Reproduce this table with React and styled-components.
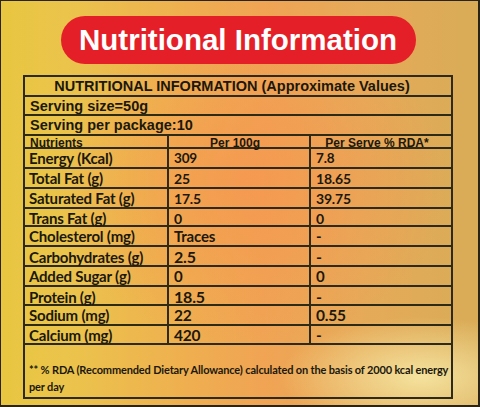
import styled, { createGlobalStyle } from 'styled-components';

const GlobalStyle = createGlobalStyle`
  html, body {
    margin: 0;
    padding: 0;
  }
  body {
    font-family: 'Liberation Sans', Arial, sans-serif;
  }
`;

const Label = styled.div`
  box-sizing: border-box;
  width: 480px;
  height: 407px;
  padding: 15px 25px 0 22px;
  border: 1px solid #2a2416;
  border-right-width: 2px;
  border-bottom-width: 2px;
  background:
    radial-gradient(ellipse 140px 60px at 88% 93%, rgba(248, 236, 170, 0.85), transparent),
    radial-gradient(ellipse 200px 160px at 52% 45%, rgba(246, 150, 80, 0.75), transparent),
    linear-gradient(90deg, #e8c640 0%, #ebc44c 14%, #efae50 40%, #f0a454 55%, #e6aa58 75%, #d9ac58 100%);
`;

const Pill = styled.div`
  width: 355px;
  height: 48px;
  margin: 0 auto 11px;
  border-radius: 24px;
  background: #e51f27;
  display: flex;
  align-items: center;
  justify-content: center;
  color: #ffffff;
  font-family: 'Liberation Sans', Arial, sans-serif;
  font-weight: 700;
  font-size: 29.5px;
`;

const Table = styled.div`
  box-sizing: border-box;
  border: 2px solid #2e2a18;
  border-bottom: none;
  color: #1b180c;
`;

const Row = styled.div`
  box-sizing: border-box;
  height: ${(p) => p.$h}px;
  border-bottom: 2px solid #2e2a18;
  display: grid;
  grid-template-columns: 1fr 1fr 1fr;
  align-items: center;
`;

const FullRow = styled.div`
  box-sizing: border-box;
  height: ${(p) => p.$h}px;
  border-bottom: 2px solid #2e2a18;
  display: flex;
  align-items: center;
  justify-content: ${(p) => (p.$center ? 'center' : 'flex-start')};
  padding: ${(p) => (p.$center ? '0 12px 0 0' : '0 0 0 5px')};
  font-family: 'Liberation Sans', Arial, sans-serif;
  font-weight: 700;
  font-size: 14.5px;
`;

const Cell = styled.div`
  box-sizing: border-box;
  height: 100%;
  display: flex;
  align-items: center;
  padding-left: ${(p) => (p.$first ? '4px' : '5px')};
  border-left: ${(p) => (p.$first ? 'none' : '2px solid #2e2a18')};
  font-family: Lato, 'Liberation Sans', sans-serif;
  font-weight: 700;
  font-size: ${(p) => p.$size || 15}px;
  letter-spacing: -0.2px;
  white-space: nowrap;
`;

const HeadCell = styled.div`
  box-sizing: border-box;
  height: 100%;
  display: flex;
  align-items: center;
  justify-content: ${(p) => (p.$first ? 'flex-start' : 'center')};
  padding: ${(p) => (p.$first ? '0 0 0 5px' : '0 8px 0 0')};
  border-left: ${(p) => (p.$first ? 'none' : '2px solid #2e2a18')};
  font-family: 'Liberation Sans', Arial, sans-serif;
  font-weight: 700;
  font-size: 12px;
  white-space: nowrap;
`;

const Note = styled.div`
  box-sizing: border-box;
  height: 54px;
  border-bottom: 2px solid #2e2a18;
  padding: 16px 0 0 4px;
  font-family: Lato, 'Liberation Sans', sans-serif;
  font-weight: 700;
  font-size: 11px;
  line-height: 17px;
  letter-spacing: -0.15px;
`;

const rows = [
  { name: 'Energy (Kcal)', per100: '309', rda: '7.8', h: 20, size: 13.5 },
  { name: 'Total Fat (g)', per100: '25', rda: '18.65', h: 20, size: 14 },
  { name: 'Saturated Fat (g)', per100: '17.5', rda: '39.75', h: 20, size: 14 },
  { name: 'Trans Fat (g)', per100: '0', rda: '0', h: 18, size: 14 },
  { name: 'Cholesterol (mg)', per100: 'Traces', rda: '-', h: 20, size: 15 },
  { name: 'Carbohydrates (g)', per100: '2.5', rda: '-', h: 20, size: 16 },
  { name: 'Added Sugar (g)', per100: '0', rda: '0', h: 20, size: 15 },
  { name: 'Protein (g)', per100: '18.5', rda: '-', h: 19, size: 16 },
  { name: 'Sodium (mg)', per100: '22', rda: '0.55', h: 20, size: 15.5 },
  { name: 'Calcium (mg)', per100: '420', rda: '-', h: 19, size: 15.5 },
];

const App = () => {
  return (
    <>
      <GlobalStyle />
      <Label>
        <Pill>Nutritional Information</Pill>
        <Table>
          <FullRow $h={20} $center>
            NUTRITIONAL INFORMATION (Approximate Values)
          </FullRow>
          <FullRow $h={19}>Serving size=50g</FullRow>
          <FullRow $h={20}>Serving per package:10</FullRow>
          <Row $h={13}>
            <HeadCell $first>Nutrients</HeadCell>
            <HeadCell>Per 100g</HeadCell>
            <HeadCell>Per Serve % RDA*</HeadCell>
          </Row>
          {rows.map((r) => (
            <Row key={r.name} $h={r.h}>
              <Cell $first $size={15}>{r.name}</Cell>
              <Cell $size={r.size}>{r.per100}</Cell>
              <Cell $size={r.size}>{r.rda}</Cell>
            </Row>
          ))}
          <Note>
            ** % RDA (Recommended Dietary Allowance) calculated on the basis of 2000 kcal energy
            per day
          </Note>
        </Table>
      </Label>
    </>
  );
};

export default App;
